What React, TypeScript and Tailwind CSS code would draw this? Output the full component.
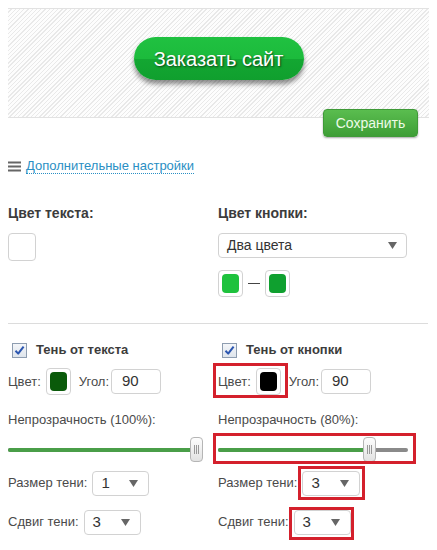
import React from "react";

const Arrow = () => (
  <svg width="9" height="7" viewBox="0 0 9 7" className="shrink-0">
    <path d="M0 0 L9 0 L4.5 7 Z" fill="#666" />
  </svg>
);

const Check = () => (
  <span className="w-[15px] h-[15px] border border-[#8e9db0] bg-[linear-gradient(#f4f6f9,#dfe5ec)] flex items-center justify-center shrink-0">
    <svg width="11" height="11" viewBox="0 0 11 11">
      <path d="M1.5 5.8 L4.2 8.6 L9.6 1.6" stroke="#2b56b0" strokeWidth="2" fill="none" strokeLinejoin="round" />
    </svg>
  </span>
);

const Swatch = ({ color }: { color: string }) => (
  <span className="w-[25px] h-[27px] rounded-[4px] border border-[#d2d2d2] bg-white p-[3px] flex shrink-0">
    <span className="flex-1 rounded-[4px]" style={{ background: color }} />
  </span>
);

const Sel = ({ v, w }: { v: string; w: string }) => (
  <span className={`h-[25px] ${w} rounded-[4px] border border-[#d2d2d2] bg-white flex items-center justify-between pl-[8px] pr-[10px] text-[15px] text-[#333] shrink-0`}>
    <span>{v}</span>
    <Arrow />
  </span>
);

const Red = ({ children, cls }: { children: React.ReactNode; cls: string }) => (
  <span className="relative flex">
    {children}
    <span className={`absolute ${cls} border-[3px] border-[#d4202c] pointer-events-none`} />
  </span>
);

const Handle = () => (
  <span className="absolute top-0 w-[13px] h-[25px] rounded-[4px] border border-[#b5b5b5] bg-[linear-gradient(#fdfdfd,#e2e2e2)] flex items-center justify-center gap-[1px]">
    <span className="w-px h-[9px] bg-[#999]" />
    <span className="w-px h-[9px] bg-[#999]" />
    <span className="w-px h-[9px] bg-[#999]" />
  </span>
);

function ShadowCol({ title, color, op, pct, size, shift, right }: { title: string; color: string; op: string; pct: number; size: string; shift: string; right?: boolean }) {
  const W = right ? 190 : 195;
  const hx = Math.round(((W - 13) * pct) / 100);
  const colorRow = (
    <span className="flex items-center gap-[5px]">
      <span>Цвет:</span>
      <Swatch color={color} />
    </span>
  );
  const slider = (
    <div className="relative h-[25px]" style={{ width: W }}>
      <div className="absolute left-0 right-0 top-[11px] h-[4px] rounded-full bg-[#8a8a8a]" />
      <div className="absolute left-0 top-[11px] h-[4px] rounded-full bg-[#4a9e48]" style={{ width: hx + 6 }} />
      <span className="absolute top-0 h-[25px]" style={{ left: hx }}>
        <Handle />
      </span>
    </div>
  );
  const sizeRow = (
    <span className="flex items-center gap-[5px]">
      <span className="whitespace-nowrap">Размер тени:</span>
      {right ? (
        <Red cls="-left-[4px] -right-[5px] -top-[5px] -bottom-[4px]">
          <Sel v={size} w="w-[58px]" />
        </Red>
      ) : (
        <Sel v={size} w="w-[57px]" />
      )}
    </span>
  );
  const shiftRow = (
    <span className="flex items-center gap-[5px]">
      <span className="whitespace-nowrap">Сдвиг тени:</span>
      {right ? (
        <Red cls="-left-[5px] -right-[3px] -top-[3px] -bottom-[5px]">
          <Sel v={shift} w="w-[57px]" />
        </Red>
      ) : (
        <Sel v={shift} w="w-[57px]" />
      )}
    </span>
  );
  return (
    <div className="flex flex-col text-[13px] text-[#4a4a4a]">
      <div className="flex items-center h-[16px] pl-[4px] gap-[9px]">
        <Check />
        <span className="font-bold text-[13px] text-[#3c3c3c]">{title}</span>
      </div>
      <div className="flex items-center h-[27px] mt-[10px] gap-[8px]">
        {right ? <Red cls="-left-[5px] -right-[7px] -top-[5px] -bottom-[3px]">{colorRow}</Red> : colorRow}
        <span className="flex items-center gap-[2px]">
          <span>Угол:</span>
          <span className="w-[50px] h-[25px] rounded-[4px] border border-[#d2d2d2] bg-white flex items-center pl-[10px] text-[15px] text-[#333]">90</span>
        </span>
      </div>
      <div className="h-[20px] leading-[20px] mt-[15px]">{op}</div>
      <div className="mt-[7px] flex">
        {right ? (
          <Red cls="-left-[5px] -right-[8px] -top-[4px] -bottom-[2px]">{slider}</Red>
        ) : (
          slider
        )}
      </div>
      <div className="flex items-center h-[26px] mt-[8px]">{sizeRow}</div>
      <div className="flex items-center h-[26px] mt-[13px]">{shiftRow}</div>
    </div>
  );
}

export default function App() {
  return (
    <div className="w-[437px] h-[550px] overflow-hidden bg-white font-['Liberation_Sans',Arial,sans-serif] text-[#444]">
      <div className="px-[8px] pt-[8px]">
        <div className="h-[110px] border-t border-b border-[#e2e2e2] bg-[repeating-linear-gradient(135deg,#fdfdfd_0px,#fdfdfd_2px,#e9e9e9_2px,#e9e9e9_3px)] flex justify-center items-start pt-[28px]">
          <div className="w-[170px] h-[43px] rounded-full bg-[linear-gradient(#20c141_0%,#1cbb3c_50%,#13a732_52%,#109f2e_100%)] shadow-[0_4px_5px_rgba(0,0,0,0.45)] flex items-center justify-center text-white text-[20px] [text-shadow:1px_1px_2px_rgba(0,0,0,0.6)]">
            Заказать сайт
          </div>
        </div>
        <div className="flex justify-end pr-[11px] -mt-[9px]">
          <div className="w-[95px] h-[28px] rounded-[4px] border border-[#3f9a38] bg-[linear-gradient(#5abd4f,#3e9e36)] shadow-[0_1px_2px_rgba(0,0,0,0.35)] flex items-center justify-center text-[14px] text-[#eefbe8]">
            Сохранить
          </div>
        </div>
        <div className="flex items-center gap-[5px] mt-[21px] h-[16px]">
          <svg width="13" height="11" viewBox="0 0 13 11">
            <rect x="0" y="0.5" width="13" height="2" fill="#666" />
            <rect x="0" y="4.5" width="13" height="2" fill="#666" />
            <rect x="0" y="8.5" width="13" height="2" fill="#666" />
          </svg>
          <span className="text-[13px] text-[#2a8fc4] border-b border-dotted border-[#2a8fc4] leading-[14px]">Дополнительные настройки</span>
        </div>
        <div className="grid grid-cols-[210px_1fr] mt-[29px]">
          <div className="flex flex-col">
            <div className="h-[20px] leading-[20px] font-bold text-[14px] text-[#3c3c3c]">Цвет текста:</div>
            <div className="mt-[10px] w-[28px] h-[28px] rounded-[4px] border border-[#d2d2d2] bg-white" />
          </div>
          <div className="flex flex-col">
            <div className="h-[20px] leading-[20px] font-bold text-[14px] text-[#3c3c3c]">Цвет кнопки:</div>
            <div className="mt-[10px] w-[189px] h-[25px] rounded-[4px] border border-[#d2d2d2] bg-white flex items-center justify-between pl-[8px] pr-[9px] text-[14px] text-[#333]">
              <span>Два цвета</span>
              <Arrow />
            </div>
            <div className="mt-[12px] flex items-center gap-[5px]">
              <Swatch color="#1ec23d" />
              <span className="w-[12px] h-px bg-[#444]" />
              <Swatch color="#0fa02f" />
            </div>
          </div>
        </div>
        <div className="mt-[26px] h-px bg-[#dcdcdc] mr-[1px]" />
        <div className="grid grid-cols-[210px_1fr] mt-[18px]">
          <ShadowCol title="Тень от текста" color="#0a5a0a" op="Непрозрачность (100%):" pct={100} size="1" shift="3" />
          <ShadowCol title="Тень от кнопки" color="#000000" op="Непрозрачность (80%):" pct={82} size="3" shift="3" right />
        </div>
      </div>
    </div>
  );
}
